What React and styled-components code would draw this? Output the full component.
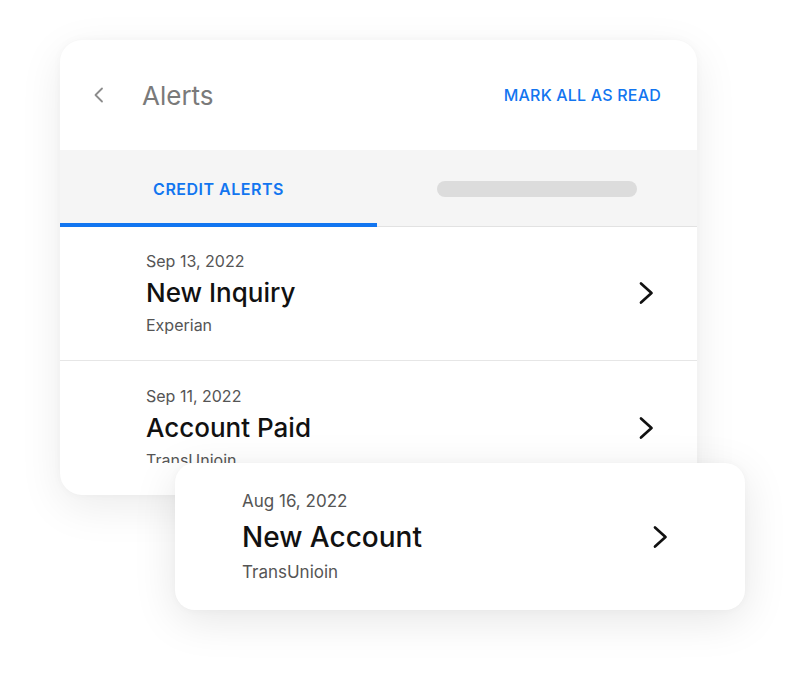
import React from "react";
import styled, { createGlobalStyle } from "styled-components";

const GlobalStyle = createGlobalStyle`
  html, body {
    margin: 0;
    padding: 0;
    background: #ffffff;
    font-family: Inter, "Noto Sans", Roboto, sans-serif;
  }
`;

const Page = styled.div`
  width: 802px;
  height: 699px;
  padding: 40px 0 0 60px;
  box-sizing: border-box;
  overflow: hidden;
`;

const Card = styled.div`
  width: 637px;
  background: #fff;
  border-radius: 22px;
  padding-bottom: 32px;
  box-shadow: 0 12px 44px rgba(0, 0, 0, 0.08), 0 0 10px rgba(0, 0, 0, 0.03);
  overflow: hidden;
`;

const Header = styled.div`
  height: 110px;
  display: flex;
  align-items: center;
  padding: 0 36px 0 33px;
`;

const BackButton = styled.button`
  border: 0;
  background: none;
  padding: 0;
  width: 12px;
  height: 16px;
  display: flex;
  margin-right: 37px;
  cursor: pointer;
`;

const Title = styled.h1`
  margin: 0;
  font-size: 26px;
  font-weight: 400;
  color: #7a7a7a;
  flex: 1;
`;

const LinkButton = styled.button`
  border: 0;
  background: none;
  padding: 0;
  font-family: inherit;
  font-size: 16px;
  font-weight: 500;
  color: #1275f0;
  letter-spacing: 0.2px;
  cursor: pointer;
`;

const Tabs = styled.div`
  height: 77px;
  display: grid;
  grid-template-columns: 317px 1fr;
  background: #f5f5f5;
  border-bottom: 1px solid #e2e2e2;
  box-sizing: border-box;
`;

const Tab = styled.div`
  display: flex;
  align-items: center;
  justify-content: center;
  position: relative;
  font-size: 16px;
  font-weight: 600;
  letter-spacing: 0.5px;
  color: #1275f0;
  padding-top: 2px;

  ${(p) =>
    p.$active &&
    `
    &::after {
      content: "";
      position: absolute;
      left: 0;
      right: 0;
      bottom: -1px;
      height: 4px;
      background: #1275f0;
    }
  `}
`;

const Placeholder = styled.div`
  width: 200px;
  height: 16px;
  border-radius: 8px;
  background: #dcdcdc;
`;

const List = styled.div`
  height: 236px;
  overflow: hidden;
`;

const Row = styled.div`
  display: flex;
  align-items: center;
  padding: ${(p) => p.$pad};
  border-bottom: ${(p) => (p.$divider ? "1px solid #e6e6e6" : "none")};
`;

const Info = styled.div`
  flex: 1;
  display: flex;
  flex-direction: column;
  gap: ${(p) => (p.$big ? 8 : 6)}px;
`;

const DateText = styled.div`
  font-size: ${(p) => (p.$big ? 17 : 16)}px;
  line-height: ${(p) => (p.$big ? 21 : 20)}px;
  color: #555;
`;

const ItemTitle = styled.div`
  font-size: ${(p) => (p.$big ? 28 : 26)}px;
  line-height: ${(p) => (p.$big ? 34 : 32)}px;
  font-weight: 500;
  color: #111;
`;

const Source = styled.div`
  font-size: ${(p) => (p.$big ? 17 : 16)}px;
  line-height: ${(p) => (p.$big ? 21 : 20)}px;
  color: #555;
`;

const Floating = styled.div`
  position: relative;
  z-index: 2;
  width: 570px;
  margin: -32px 0 0 115px;
  background: #fff;
  border-radius: 20px;
  box-shadow: 0 10px 44px rgba(0, 0, 0, 0.1), 0 0 8px rgba(0, 0, 0, 0.03);
`;

const Chevron = ({ color = "#111", width = 2.7 }) => (
  <svg width="16" height="24" viewBox="0 0 16 24" fill="none">
    <polyline
      points="3,2.5 13.5,12 3,21.5"
      stroke={color}
      strokeWidth={width}
      strokeLinecap="round"
      strokeLinejoin="round"
    />
  </svg>
);

const BackIcon = () => (
  <svg width="12" height="16" viewBox="0 0 12 16" fill="none">
    <polyline
      points="9,1.5 2.5,8 9,14.5"
      stroke="#8c8c8c"
      strokeWidth="1.8"
      strokeLinecap="round"
      strokeLinejoin="round"
    />
  </svg>
);

const Item = ({ date, title, source, pad, big, divider }) => (
  <Row $pad={pad} $divider={divider}>
    <Info $big={big}>
      <DateText $big={big}>{date}</DateText>
      <ItemTitle $big={big}>{title}</ItemTitle>
      <Source $big={big}>{source}</Source>
    </Info>
    <Chevron />
  </Row>
);

const App = () => {
  return (
    <Page>
      <GlobalStyle />
      <Card>
        <Header>
          <BackButton aria-label="Back">
            <BackIcon />
          </BackButton>
          <Title>Alerts</Title>
          <LinkButton>MARK ALL AS READ</LinkButton>
        </Header>
        <Tabs>
          <Tab $active>CREDIT ALERTS</Tab>
          <Tab>
            <Placeholder />
          </Tab>
        </Tabs>
        <List>
          <Item
            date="Sep 13, 2022"
            title="New Inquiry"
            source="Experian"
            pad="24px 43px 25px 86px"
            divider
          />
          <Item
            date="Sep 11, 2022"
            title="Account Paid"
            source="TransUnioin"
            pad="25px 43px 25px 86px"
          />
        </List>
      </Card>
      <Floating>
        <Item
          date="Aug 16, 2022"
          title="New Account"
          source="TransUnioin"
          pad="28px 77px 27px 67px"
          big
        />
      </Floating>
    </Page>
  );
};

export default App;
